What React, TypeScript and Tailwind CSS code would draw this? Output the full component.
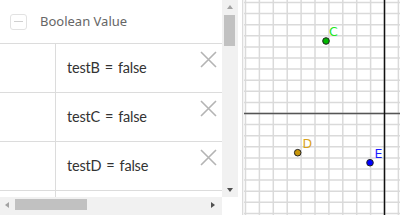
import React from "react"

const rows = ["testB", "testC", "testD", ""]

const CloseIcon = () => (
  <svg width="17" height="17" viewBox="0 0 17 17" className="block">
    <path d="M1 1 L16 16 M16 1 L1 16" stroke="#b4b4b4" strokeWidth="1.6" fill="none" />
  </svg>
)

const Row = ({ name }: { name: string }) => (
  <div className="flex h-[49px] shrink-0 border-b border-[#dcdcdc]">
    <div className="w-[56px] shrink-0 border-r border-[#dcdcdc]" />
    <div className="relative flex flex-1 items-center pl-[11px]">
      {name && (
        <span className="font-['Lato',sans-serif] text-[14.5px] tracking-[-0.2px] text-[#333]">
          {name}
          <span className="mx-[5px]">=</span>
          false
        </span>
      )}
      {name && (
        <button className="absolute right-[5px] top-[7px]">
          <CloseIcon />
        </button>
      )}
    </div>
  </div>
)

const Graphics = () => {
  const vx: number[] = []
  for (let x = 384.5 - 244 - 13.9 * 10; x < 160; x += 13.9) vx.push(x)
  const hy: number[] = []
  for (let y = 113.5 - 11.1 * 11; y < 220; y += 11.1) hy.push(y)
  return (
    <svg width="156" height="215" className="block">
      <rect width="156" height="215" fill="#fff" />
      {vx.map((x, i) => (
        <line key={"v" + i} x1={x} y1={0} x2={x} y2={215} stroke="#dadada" strokeWidth="1.5" />
      ))}
      {hy.map((y, i) => (
        <line key={"h" + i} x1={0} y1={y} x2={156} y2={y} stroke="#dadada" strokeWidth="1.5" />
      ))}
      <line x1={0} y1={113.5} x2={156} y2={113.5} stroke="#555" strokeWidth="1.5" />
      <line x1={140.5} y1={0} x2={140.5} y2={215} stroke="#111" strokeWidth="1.5" />
      <g fontFamily="'DejaVu Sans', sans-serif" fontSize="12.5">
        <circle cx={82} cy={41} r={3.3} fill="#00b800" stroke="#222" strokeWidth="1" />
        <text x={329 - 244} y={36} fill="#22e622">C</text>
        <circle cx={53.7} cy={152.7} r={3.3} fill="#c8960a" stroke="#222" strokeWidth="1" />
        <text x={58.5} y={148} fill="#d9a21a">D</text>
        <circle cx={126} cy={162.7} r={3.3} fill="#0000ff" stroke="#222" strokeWidth="1" />
        <text x={130.5} y={158} fill="#1a1aff">E</text>
      </g>
    </svg>
  )
}

export default function App() {
  return (
    <div className="flex h-[215px] w-[400px] overflow-hidden bg-white">
      {/* algebra view */}
      <div className="flex w-[238px] shrink-0 flex-col">
        <div className="flex min-h-0 flex-1">
          <div className="flex w-[222px] flex-col overflow-hidden">
            <div className="flex h-[44px] shrink-0 items-center border-b border-[#dcdcdc] pl-[10px]">
              <div className="flex h-[16px] w-[17px] items-center justify-center rounded-[3px] border border-[#e2e2e2]">
                <div className="h-[1.5px] w-[9px] bg-[#d0d0d0]" />
              </div>
              <span className="ml-[13px] font-['Noto_Sans',sans-serif] text-[13px] text-[#666]">
                Boolean Value
              </span>
            </div>
            {rows.map((r, i) => (
              <Row key={i} name={r} />
            ))}
          </div>
          {/* vertical scrollbar */}
          <div className="relative w-[16px] bg-[#f1f1f1]">
            <div className="absolute left-[5px] top-[5px] h-0 w-0 border-x-[3.5px] border-b-[4px] border-x-transparent border-b-[#a3a3a3]" />
            <div className="absolute left-[2px] top-[15px] h-[31px] w-[11px] bg-[#c1c1c1]" />
            <div className="absolute bottom-[5px] left-[5px] h-0 w-0 border-x-[3.5px] border-t-[4px] border-x-transparent border-t-[#505050]" />
          </div>
        </div>
        {/* horizontal scrollbar */}
        <div className="flex h-[18px] shrink-0">
          <div className="relative w-[222px] bg-[#f1f1f1]">
            <div className="absolute left-[5px] top-[5px] h-0 w-0 border-y-[3.5px] border-r-[4px] border-y-transparent border-r-[#a3a3a3]" />
            <div className="absolute left-[15px] top-[2px] h-[11px] w-[72px] bg-[#c1c1c1]" />
            <div className="absolute right-[7px] top-[5px] h-0 w-0 border-y-[3.5px] border-l-[4px] border-y-transparent border-l-[#505050]" />
          </div>
          <div className="w-[16px] bg-white" />
        </div>
      </div>
      {/* splitter */}
      <div className="flex w-[6px] shrink-0">
        <div className="w-[4px] bg-white" />
        <div className="w-[1px] bg-[#dcdcdc]" />
        <div className="w-[1px] bg-[#f4f4f4]" />
      </div>
      <Graphics />
    </div>
  )
}
